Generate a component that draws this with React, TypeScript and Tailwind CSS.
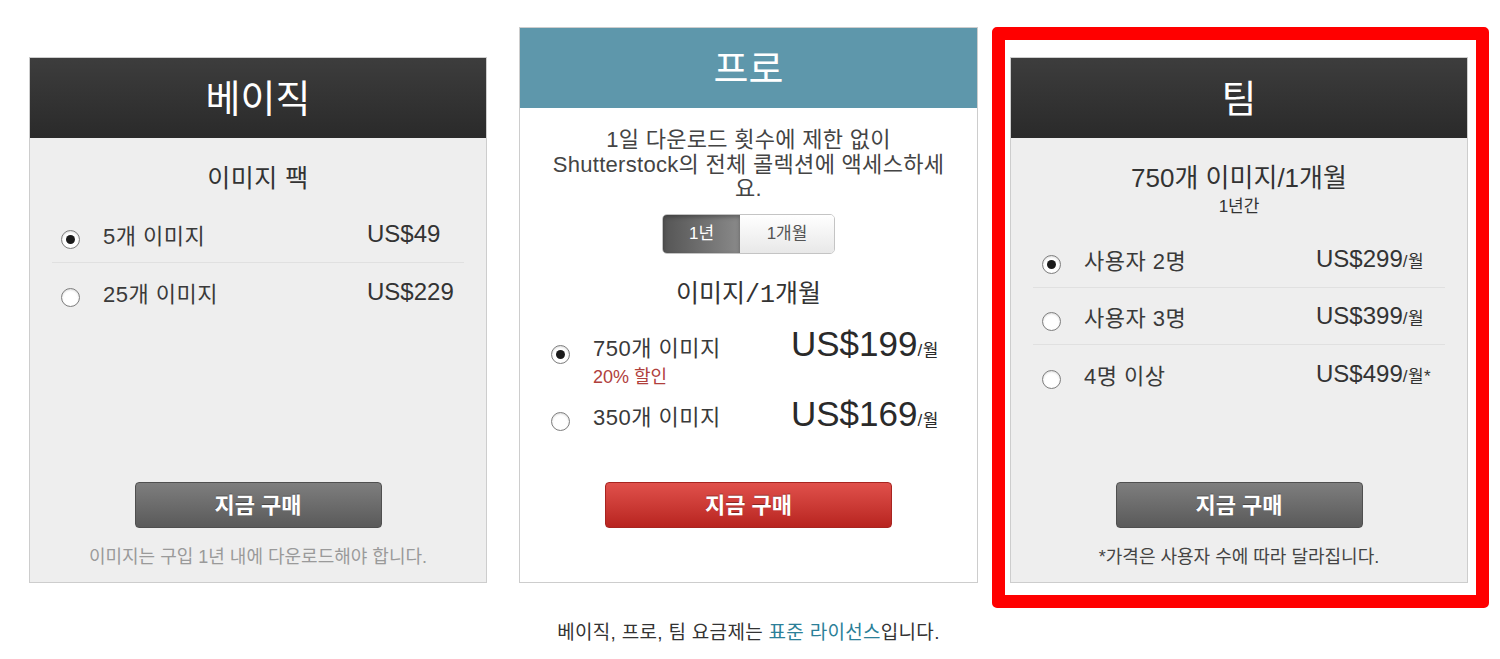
import React from "react";

type Plan = {
  label: string;
  price: string;
  unit?: string;
  checked?: boolean;
};

const Radio = ({ checked }: { checked?: boolean }) => (
  <span className="flex h-[19px] w-[19px] shrink-0 items-center justify-center rounded-full border border-[#7d7d7d] bg-white shadow-[inset_0_1px_2px_rgba(0,0,0,0.15)]">
    {checked && <span className="h-[9px] w-[9px] rounded-full bg-[#1b1b1b]" />}
  </span>
);

const Row = ({ plan, labelWidth }: { plan: Plan; labelWidth: string }) => (
  <div className="flex h-[57px] items-center pt-[5px]">
    <span className="ml-[9px] mt-[6px]">
      <Radio checked={plan.checked} />
    </span>
    <span className={`ml-[23px] ${labelWidth} text-[22px] tracking-[0.5px] text-[#3a3a3a]`}>{plan.label}</span>
    <span className="mb-[5px] whitespace-nowrap text-[24px] text-[#333]">
      {plan.price}
      {plan.unit && <span className="text-[17px] tracking-[0.5px]">{plan.unit}</span>}
    </span>
  </div>
);

const BuyButton = ({ red }: { red?: boolean }) => (
  <button
    className={
      red
        ? "h-[46px] w-[287px] rounded-[4px] border border-[#a82420] bg-linear-to-b from-[#e0504b] to-[#b8231f] text-[22px] font-bold text-white [text-shadow:0_-1px_0_rgba(0,0,0,0.35)]"
        : "h-[46px] w-[247px] rounded-[4px] border border-[#4f4f4f] bg-linear-to-b from-[#7e7e7e] to-[#5a5a5a] text-[22px] font-bold text-white [text-shadow:0_-1px_0_rgba(0,0,0,0.35)]"
    }
  >
    지금 구매
  </button>
);

const basic: Plan[] = [
  { label: "5개 이미지", price: "US$49", checked: true },
  { label: "25개 이미지", price: "US$229" },
];

const team: Plan[] = [
  { label: "사용자 2명", price: "US$299", unit: "/월", checked: true },
  { label: "사용자 3명", price: "US$399", unit: "/월" },
  { label: "4명 이상", price: "US$499", unit: "/월*" },
];

export default function App() {
  return (
    <div className="h-[659px] w-[1500px] overflow-hidden bg-white font-['Liberation_Sans','Noto_Sans_CJK_KR',sans-serif] text-[#333]">
      <div className="flex items-start pl-[29px] pt-[27px]">
        {/* basic */}
        <div className="mt-[30px] flex h-[526px] w-[458px] flex-col border border-[#cdcdcd] bg-[#eeeeee]">
          <div className="flex h-[80px] items-center justify-center bg-linear-to-b from-[#3d3d3d] to-[#2a2a2a] pt-[2px] text-[38px] text-white">
            베이직
          </div>
          <div className="pt-[26px] text-center text-[25px] leading-[28px] tracking-[0.5px] text-[#333]">이미지 팩</div>
          <div className="mx-[22px] mt-[14px] divide-y divide-[#e0e0e0]">
            {basic.map((p) => (
              <Row key={p.label} plan={p} labelWidth="w-[264px]" />
            ))}
          </div>
          <div className="mt-auto flex flex-col items-center pb-[15px]">
            <BuyButton />
            <p className="mt-[19px] text-[18px] leading-[20px] text-[#9a9a9a]">
              이미지는 구입 1년 내에 다운로드해야 합니다.
            </p>
          </div>
        </div>

        {/* pro */}
        <div className="ml-[32px] flex flex-col items-center">
          <div className="flex h-[556px] w-[459px] flex-col border border-[#cdcdcd] bg-white">
            <div className="flex h-[80px] items-center justify-center bg-[#5e97ab] pt-[3px] text-[38px] text-white">
              프로
            </div>
            <p className="whitespace-nowrap pt-[20px] text-center text-[22px] leading-[24.5px] tracking-[0.3px] text-[#444]">
              1일 다운로드 횟수에 제한 없이
              <br />
              Shutterstock의 전체 콜렉션에 액세스하세
              <br />
              요.
            </p>
            <div className="mt-[12px] flex justify-center">
              <div className="flex h-[40px] overflow-hidden rounded-[5px] border border-[#c4c4c4] text-[17px]">
                <span className="flex w-[77px] items-center justify-center bg-linear-to-r from-[#555555] to-[#8a8a8a] text-white shadow-[inset_0_2px_4px_rgba(0,0,0,0.3)]">
                  1년
                </span>
                <span className="flex w-[94px] items-center justify-center bg-linear-to-b from-[#ffffff] to-[#e8e8e8] text-[#555]">
                  1개월
                </span>
              </div>
            </div>
            <div className="mt-[25px] text-center text-[25px] leading-[28px] text-[#333]">
              이미지<span className="font-['Liberation_Mono',monospace]">/1</span>개월
            </div>
            <div className="mx-[22px] mt-[26px] flex items-start">
              <span className="ml-[9px] mt-[6px] flex h-[26px] items-center">
                <Radio checked />
              </span>
              <div className="ml-[23px] w-[198px]">
                <div className="text-[22px] leading-[26px] tracking-[0.5px] text-[#3a3a3a]">750개 이미지</div>
                <div className="mt-[4px] text-[18px] leading-[22px] text-[#b0403c]">20% 할인</div>
              </div>
              <span className="-mt-[7px] whitespace-nowrap text-[35px] leading-[30px] text-[#2a2a2a]">
                US$199<span className="text-[17px] tracking-[0.5px]">/월</span>
              </span>
            </div>
            <div className="mx-[22px] mt-[17px] flex items-start">
              <span className="ml-[9px] mt-[4px] flex h-[26px] items-center">
                <Radio />
              </span>
              <div className="ml-[23px] w-[198px] text-[22px] leading-[26px] tracking-[0.5px] text-[#3a3a3a]">350개 이미지</div>
              <span className="-mt-[6px] whitespace-nowrap text-[35px] leading-[30px] text-[#2a2a2a]">
                US$169<span className="text-[17px] tracking-[0.5px]">/월</span>
              </span>
            </div>
            <div className="mt-auto flex justify-center pb-[54px]">
              <BuyButton red />
            </div>
          </div>
          <p className="mt-[39px] text-[19px] leading-[22px] tracking-[0.3px] text-[#333]">
            베이직, 프로, 팀 요금제는 <span className="text-[#2b7f98]">표준 라이선스</span>입니다.
          </p>
        </div>

        {/* team */}
        <div className="ml-[14px] rounded-[5px] border-[13px] border-[#ff0000] bg-white pb-[12px] pl-[5px] pr-[8px] pt-[17px]">
          <div className="flex h-[526px] w-[458px] flex-col border border-[#cdcdcd] bg-[#eeeeee]">
            <div className="flex h-[80px] items-center justify-center bg-linear-to-b from-[#3d3d3d] to-[#2a2a2a] pt-[2px] text-[38px] text-white">
              팀
            </div>
            <div className="pt-[26px] text-center text-[26px] leading-[28px] text-[#333]">750개 이미지/1개월</div>
            <div className="mt-[5px] text-center text-[17px] leading-[20px] text-[#333]">1년간</div>
            <div className="mx-[22px] mt-[14px] divide-y divide-[#e0e0e0]">
              {team.map((p) => (
                <Row key={p.label} plan={p} labelWidth="w-[232px]" />
              ))}
            </div>
            <div className="mt-auto flex flex-col items-center pb-[15px]">
              <BuyButton />
              <p className="mt-[19px] text-[18px] leading-[20px] text-[#444]">*가격은 사용자 수에 따라 달라집니다.</p>
            </div>
          </div>
        </div>
      </div>
    </div>
  );
}
